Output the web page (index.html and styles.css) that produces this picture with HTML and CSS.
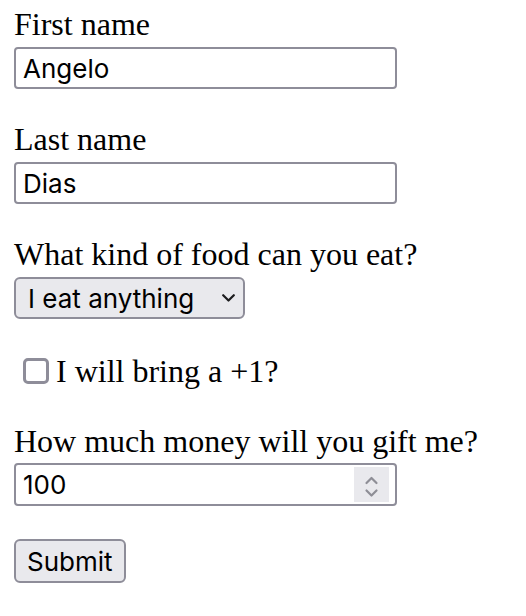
FILE: index.html
```html
<!DOCTYPE html>
<html lang="en">
<head>
<meta charset="utf-8">
<title>RSVP</title>
<link rel="stylesheet" href="styles.css">
</head>
<body>
<form class="rsvp">
  <div class="field">
    <label class="label" for="first">First name</label>
    <input class="text-input control" id="first" type="text" value="Angelo">
  </div>
  <div class="field">
    <label class="label" for="last">Last name</label>
    <input class="text-input control" id="last" type="text" value="Dias">
  </div>
  <div class="field">
    <label class="label" for="food">What kind of food can you eat?</label>
    <div class="select-wrap control">
      <select class="select" id="food">
        <option>I eat anything</option>
        <option>Vegetarian</option>
        <option>Vegan</option>
      </select>
      <svg class="chevron" width="13" height="8" viewBox="0 0 13 8" aria-hidden="true"><path d="M1.2 1.2 L6.5 6.5 L11.8 1.2" fill="none" stroke="#1c1c1e" stroke-width="2.2" stroke-linecap="round" stroke-linejoin="round"/></svg>
    </div>
  </div>
  <div class="check-row">
    <input class="checkbox" id="plusone" type="checkbox">
    <label class="label" for="plusone">I will bring a +1?</label>
  </div>
  <div class="field field--money">
    <label class="label" for="money">How much money will you gift me?</label>
    <div class="number-wrap control">
      <input class="number-input" id="money" type="text" inputmode="numeric" value="100">
      <span class="spinner" aria-hidden="true">
        <svg width="35" height="35" viewBox="0 0 35 35"><path d="M12.5 16 L17.5 11 L22.5 16 M12.5 23.5 L17.5 28.5 L22.5 23.5" fill="none" stroke="#8e8e96" stroke-width="2.2" stroke-linecap="round" stroke-linejoin="round"/></svg>
      </span>
    </div>
  </div>
  <button class="submit" type="submit">Submit</button>
</form>
</body>
</html>
```

FILE: styles.css
```css
* { box-sizing: border-box; }

body {
  margin: 0;
  padding: 6px 14px 0;
  background: #fff;
  color: #000;
  font-family: "Liberation Serif", "Times New Roman", serif;
}

.rsvp {
  display: flex;
  flex-direction: column;
  align-items: flex-start;
}

.label {
  display: block;
  font-size: 32px;
  line-height: 36px;
}

.field {
  display: flex;
  flex-direction: column;
  align-items: flex-start;
}

.field + .field { margin-top: 32px; }

.control { margin-top: 5px; }

.text-input,
.select,
.number-input,
.submit {
  font-family: Inter, "Liberation Sans", Arial, sans-serif;
  font-size: 26px;
  color: #000;
}

.text-input {
  width: 383px;
  height: 42px;
  padding: 0 7px;
  border: 2px solid #8e8d99;
  border-radius: 4px;
  background: #fff;
  outline: none;
}

.select-wrap {
  display: flex;
  align-items: center;
  width: 231px;
  height: 42px;
  border: 2px solid #8e8d99;
  border-radius: 6px;
  background: #e9e9ed;
}

.select {
  flex: 1;
  min-width: 0;
  height: 100%;
  padding: 0 0 0 12px;
  border: none;
  background: transparent;
  appearance: none;
  -webkit-appearance: none;
  outline: none;
}

.chevron { margin-right: 8px; flex: none; }

.check-row {
  display: flex;
  align-items: center;
  margin-top: 34px;
}

.checkbox {
  appearance: none;
  -webkit-appearance: none;
  width: 26px;
  height: 26px;
  margin: 0 7px 0 9px;
  border: 3.5px solid #8e8d99;
  border-radius: 5px;
  background: #fff;
}

.field--money { margin-top: 34px; }

.field--money .control { margin-top: 4px; }

.number-wrap {
  display: flex;
  align-items: center;
  width: 383px;
  height: 43px;
  border: 2px solid #8e8d99;
  border-radius: 4px;
  background: #fff;
}

.number-input {
  flex: 1;
  min-width: 0;
  height: 100%;
  padding: 0 7px;
  border: none;
  background: transparent;
  outline: none;
}

.spinner {
  display: flex;
  width: 35px;
  height: 35px;
  margin-right: 6px;
  background: #e9e9ed;
}

.submit {
  margin-top: 33px;
  height: 44px;
  padding: 0 11px;
  border: 2px solid #8e8d99;
  border-radius: 6px;
  background: #e9e9ed;
}
```
